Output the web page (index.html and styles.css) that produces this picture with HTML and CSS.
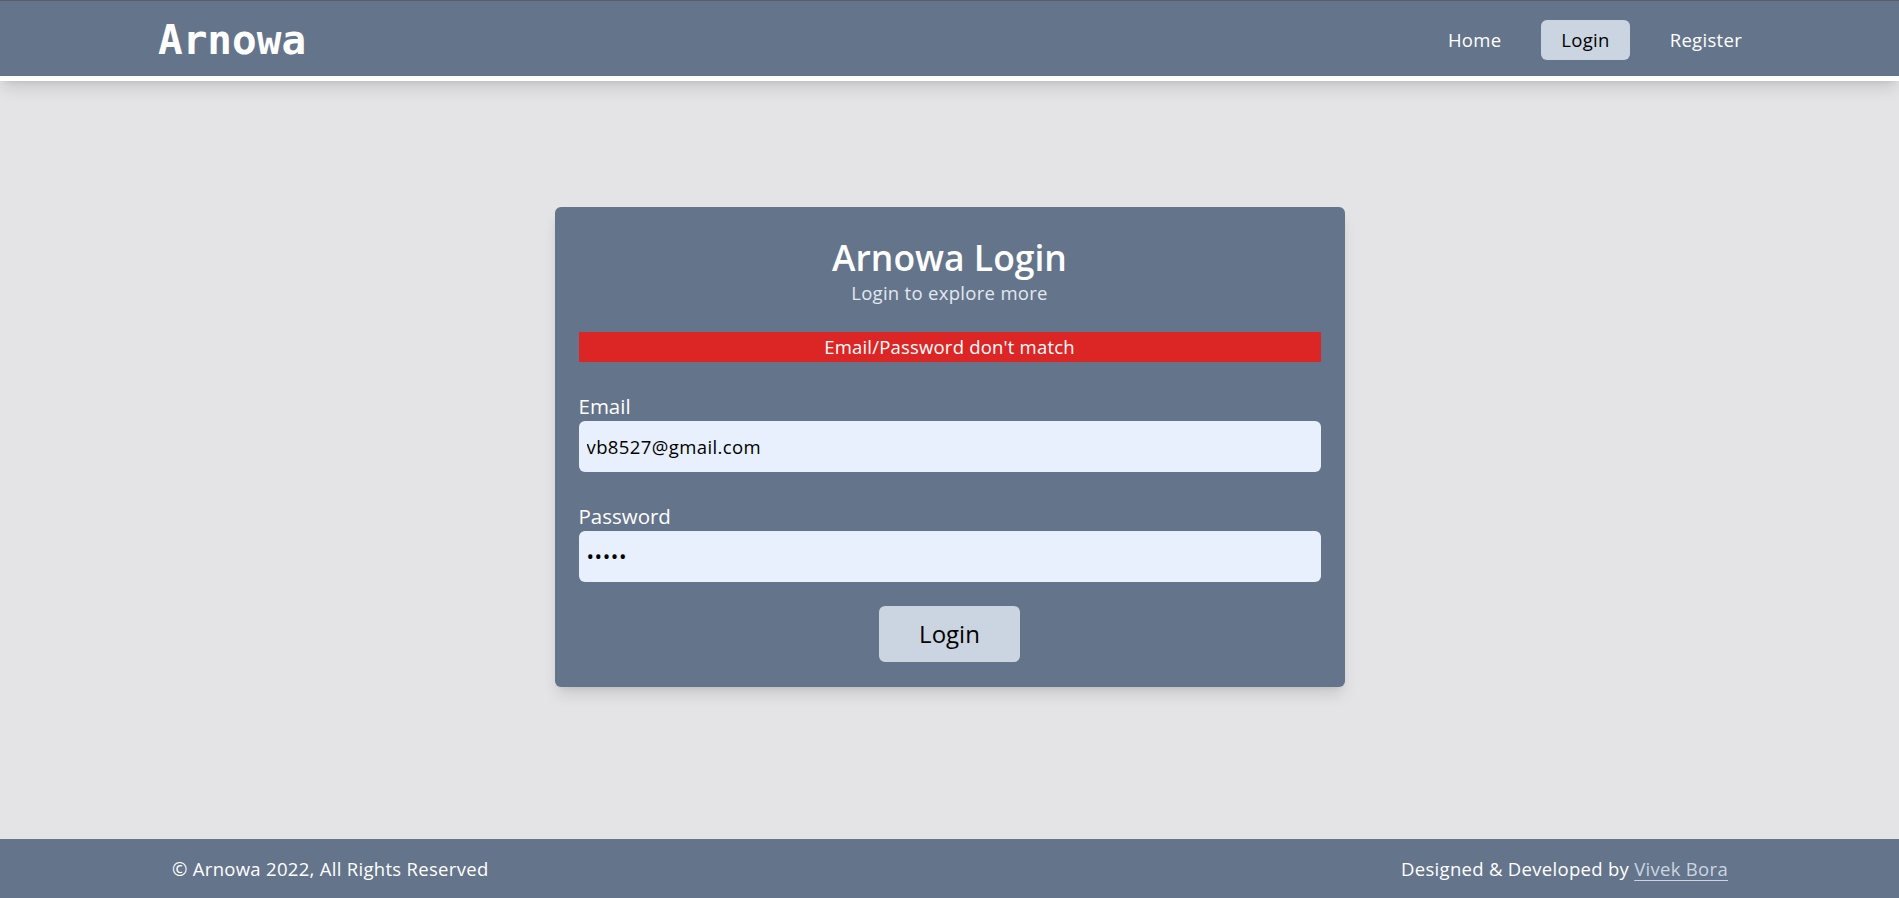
FILE: index.html
```html
<!DOCTYPE html>
<html lang="en">
<head>
<meta charset="utf-8">
<title>Arnowa Login</title>
<link rel="stylesheet" href="styles.css">
</head>
<body>
<div class="page">
  <header class="topbar">
    <a class="logo" href="#">Arnowa</a>
    <nav class="nav">
      <a class="nav-link" href="#">Home</a>
      <a class="nav-link active" href="#">Login</a>
      <a class="nav-link" href="#">Register</a>
    </nav>
  </header>
  <main class="main">
    <form class="card">
      <h1 class="card-title">Arnowa Login</h1>
      <p class="card-sub">Login to explore more</p>
      <div class="error">Email/Password don't match</div>
      <label class="field-label" for="email">Email</label>
      <input class="field-input" id="email" type="text" value="vb8527@gmail.com">
      <label class="field-label" for="pw">Password</label>
      <input class="field-input pw" id="pw" type="password" value="12345">
      <div class="actions"><button class="btn" type="button">Login</button></div>
    </form>
  </main>
  <footer class="footer">
    <span>© Arnowa 2022, All Rights Reserved</span>
    <span>Designed &amp; Developed by <a class="credit" href="#">Vivek Bora</a></span>
  </footer>
</div>
</body>
</html>
```
FILE: styles.css
```css
* { box-sizing: border-box; }
html, body { margin: 0; padding: 0; }
body {
  font-family: "Open Sans", "Noto Sans", sans-serif;
  background: #e4e4e7;
  color: #000;
}
.page {
  min-height: 898px;
  display: flex;
  flex-direction: column;
}
.topbar {
  height: 81px;
  background: #64748b;
  border-top: 1px solid #5a5d66;
  border-bottom: 5px solid #ffffff;
  box-shadow: 0 10px 15px -3px rgba(0,0,0,0.12), 0 4px 6px -4px rgba(0,0,0,0.1);
  display: flex;
  align-items: center;
  justify-content: space-between;
  padding: 0 137px 0 158px;
  position: relative;
  z-index: 1;
}
.logo {
  font-family: "DejaVu Sans Mono", "Liberation Mono", monospace;
  font-weight: bold;
  font-size: 41px;
  line-height: 44px;
  color: #ffffff;
  text-decoration: none;
  margin-top: 2px;
}
.nav {
  display: flex;
  gap: 20px;
  margin-top: 2px;
}
.nav-link {
  font-size: 18.5px;
  letter-spacing: 0.3px;
  line-height: 28px;
  padding: 6px 20px;
  border-radius: 6px;
  color: #ffffff;
  text-decoration: none;
}
.nav-link.active {
  background: #cbd5e1;
  color: #000000;
}
.main {
  flex: 1;
  display: flex;
  justify-content: center;
  align-items: flex-start;
  padding-top: 126px;
}
.card {
  width: 790px;
  background: #64748b;
  border-radius: 6px;
  padding: 24px 24px 25px;
  box-shadow: 0 10px 15px -3px rgba(0,0,0,0.12), 0 4px 6px -4px rgba(0,0,0,0.1);
  display: flex;
  flex-direction: column;
}
.card-title {
  margin: 6px 0 0;
  font-size: 35.5px;
  line-height: 40px;
  font-weight: 600;
  color: #ffffff;
  text-align: center;
}
.card-sub {
  margin: 2px 0 0;
  font-size: 18.5px;
  letter-spacing: 0.3px;
  line-height: 28px;
  color: #e2e8f0;
  text-align: center;
}
.error {
  margin-top: 24.5px;
  height: 30px;
  background: #dc2626;
  color: #ffffff;
  font-size: 18.5px;
  letter-spacing: 0.2px;
  line-height: 30px;
  text-align: center;
}
.field-label {
  margin-top: 30px;
  font-size: 20.5px;
  line-height: 28px;
  color: #ffffff;
}
.field-label + .field-input { margin-top: 1px; }
.field-input {
  height: 51px;
  border: none;
  border-radius: 6px;
  background: #e8f0fe;
  padding: 0 8px;
  font-family: "Open Sans", "Noto Sans", sans-serif;
  font-size: 18.5px;
  letter-spacing: 0.4px;
  color: #000000;
  outline: none;
}
.field-input.pw {
  letter-spacing: 0.6px;
  font-size: 20px;
}
.actions {
  margin-top: 24px;
  display: flex;
  justify-content: center;
}
.btn {
  font-family: "Open Sans", "Noto Sans", sans-serif;
  font-size: 24px;
  line-height: 32px;
  padding: 12px 40px;
  border: none;
  border-radius: 6px;
  background: #cbd5e1;
  color: #000000;
  cursor: pointer;
}
.footer {
  height: 59px;
  background: #64748b;
  color: #ffffff;
  font-size: 18.5px;
  letter-spacing: 0.3px;
  line-height: 28px;
  display: flex;
  align-items: center;
  justify-content: space-between;
  padding: 0 171px 0 172px;
}
.credit {
  color: #cbd5e1;
  text-decoration: underline;
  text-underline-offset: 4px;
}
```
